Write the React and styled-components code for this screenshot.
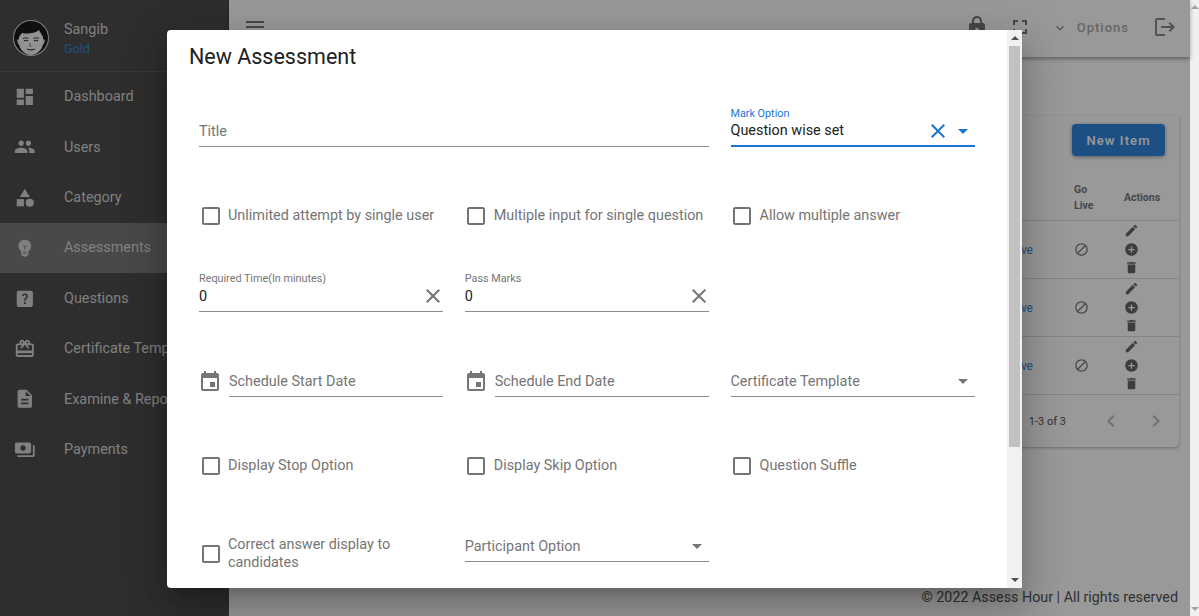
import React from 'react';
import styled, { createGlobalStyle } from 'styled-components';
import {
  MdDashboard, MdPeople, MdCategory, MdEmojiObjects, MdHelpCenter, MdOutlineRedeem, MdDescription, MdPayments,
  MdMenu, MdLock, MdFullscreen, MdExpandMore, MdLogout, MdBlock, MdEdit, MdAddCircle, MdDelete,
  MdChevronLeft, MdChevronRight, MdClose, MdArrowDropDown, MdEvent, MdCheckBoxOutlineBlank,
} from 'react-icons/md';

const GlobalStyle = createGlobalStyle`
  html, body {
    margin: 0;
    height: 100%;
    overflow: hidden;
    font-family: Roboto, 'Liberation Sans', sans-serif;
  }
`

const Screen = styled.div`
  display: flex;
  width: 1199px;
  height: 616px;
  overflow: hidden;
`

const Page = styled.div`
  position: relative;
  flex: 1;
  display: flex;
  min-width: 0;
  background: #fff;
`

const PageScroll = styled.div`
  width: 9px;
  background: #f0f0f0;
  display: flex;
  flex-direction: column;
  justify-content: space-between;
  align-items: center;
  padding: 5px 0;
  box-sizing: border-box;
`

const Arrow = styled.div`
  width: 0;
  height: 0;
  border-left: ${p => p.$size}px solid transparent;
  border-right: ${p => p.$size}px solid transparent;
  ${p => p.$down ? `border-top: ${p.$size}px solid ${p.$color};` : `border-bottom: ${p.$size}px solid ${p.$color};`}
`

const Sidebar = styled.aside`
  width: 229px;
  flex-shrink: 0;
  background: #4d4d4d;
  color: #d6d6d6;
`

const UserBox = styled.div`
  height: 65.6px;
  display: flex;
  align-items: center;
  padding: 5px 0 0 13px;
  border-bottom: 1px solid #5f5f5f;
`

const UserText = styled.div`
  margin: 2px 0 0 15px;
  font-size: 14.4px;
  line-height: 20px;
`

const Tier = styled.div`
  color: #3487d8;
  font-size: 12.5px;
  line-height: 18px;
`

const NavItem = styled.div`
  height: 50.4px;
  display: flex;
  align-items: center;
  padding-left: 14px;
  font-size: 14.4px;
  white-space: nowrap;
  background: ${p => p.$active ? '#7a7a7a' : 'transparent'};
  svg {
    width: 21.6px;
    height: 21.6px;
    margin-right: 28.4px;
    color: #d6d6d6;
  }
`

const Main = styled.main`
  flex: 1;
  min-width: 0;
  display: flex;
  flex-direction: column;
  position: relative;
`

const AppBar = styled.header`
  height: 57px;
  flex-shrink: 0;
  display: flex;
  align-items: center;
  padding: 0 13px 4px 14px;
  box-sizing: border-box;
  box-shadow: 0 2px 4px rgba(0, 0, 0, .35);
  color: #777;
  svg {
    width: 24px;
    height: 24px;
    display: block;
  }
`

const BarSpacer = styled.div`
  flex: 1;
`

const OptionsLabel = styled.span`
  font-size: 13px;
  font-weight: 500;
  letter-spacing: 1px;
  color: #aaa;
  margin: 2px 24px 0 9px;
`

const BarIcon = styled.div`
  color: ${p => p.$color || '#777'};
  margin-right: ${p => p.$gap || 0}px;
`

const OptionsChevron = styled(MdExpandMore)`
  && {
    width: 16px;
    height: 16px;
    margin-top: 2px;
    color: #999;
  }
`

const Content = styled.div`
  flex: 1;
  padding: 59px 11px 0 21px;
`

const Card = styled.section`
  height: 331px;
  border-radius: 4px;
  box-shadow: 0 1px 3px rgba(0, 0, 0, .3);
  display: flex;
  flex-direction: column;
`

const CardTop = styled.div`
  height: 66px;
  display: flex;
  justify-content: flex-end;
  align-items: flex-start;
  padding: 8px 14px 0 0;
  box-sizing: border-box;
  flex-shrink: 0;
`

const NewItem = styled.button`
  width: 93px;
  height: 32px;
  border: 0;
  border-radius: 4px;
  background: #2f86dc;
  color: #fff;
  font: 500 13px Roboto, sans-serif;
  letter-spacing: 1.1px;
  box-shadow: 0 1px 4px rgba(0, 0, 0, .4);
`

const TableRow = styled.div`
  height: ${p => p.$height}px;
  flex-shrink: 0;
  display: grid;
  grid-template-columns: 1fr 50px 55px;
  align-items: center;
  box-sizing: border-box;
  border-bottom: 1px solid #ddd;
  color: #666;
`

const HeadCell = styled.div`
  font-size: 10.5px;
  font-weight: 700;
  line-height: 16px;
  margin-bottom: 8px;
  color: #777;
`

const StatusLink = styled.div`
  text-align: right;
  padding-right: 41px;
  font-size: 12px;
  color: #3487d8;
`

const BanCell = styled.div`
  svg {
    width: 15px;
    height: 15px;
    display: block;
    color: #777;
  }
`

const ActionCell = styled.div`
  display: flex;
  flex-direction: column;
  align-items: flex-start;
  margin-top: -1px;
  svg {
    width: 15px;
    height: 15px;
    margin: 1.75px 0;
    display: block;
    color: #666;
  }
`

const Pager = styled.div`
  display: flex;
  justify-content: flex-end;
  align-items: center;
  flex: 1;
  font-size: 11px;
  color: #555;
  padding-right: 11px;
  svg {
    width: 24px;
    height: 24px;
    color: #bbb;
    margin-left: 21px;
  }
`

const PagerText = styled.span`
  margin-right: 12px;
`

const Footer = styled.footer`
  text-align: right;
  padding: 0 12px 9px 0;
  font-size: 14.3px;
  line-height: 19px;
  color: #525252;
`

const Overlay = styled.div`
  position: absolute;
  inset: 0;
  background: rgba(0, 0, 0, .4);
  display: flex;
  justify-content: center;
  align-items: flex-start;
  padding: 30px 1px 0 0;
`

const Dialog = styled.div`
  width: 855px;
  height: 558px;
  background: #fff;
  border-radius: 4px 0 0 4px;
  display: flex;
  overflow: hidden;
  box-shadow: 0 11px 15px -7px rgba(0,0,0,.2), 0 24px 38px 3px rgba(0,0,0,.14), 0 9px 46px 8px rgba(0,0,0,.12);
`

const DialogBody = styled.div`
  flex: 1;
  min-width: 0;
  overflow: hidden;
`

const DialogTitle = styled.h2`
  margin: 0;
  padding: 13px 22px 0;
  height: 69px;
  box-sizing: border-box;
  font-size: 21.5px;
  line-height: 28px;
  font-weight: 400;
  color: #212121;
`

const FormRow = styled.div`
  display: grid;
  grid-template-columns: repeat(3, 244px);
  column-gap: 21.75px;
  padding-left: 32px;
  margin-top: ${p => p.$top || 0}px;
  align-items: start;
`

const FieldWrap = styled.div`
  grid-column: span ${p => p.$span || 1};
  height: 48px;
  position: relative;
  box-sizing: border-box;
  border-bottom: ${p => p.$focused ? '2px solid #1976d2' : '1px solid #8c8c8c'};
  display: flex;
  align-items: flex-end;
  justify-content: space-between;
  padding-bottom: 4px;
  font-size: 14.4px;
  line-height: 20px;
`

const FieldLabel = styled.div`
  position: absolute;
  left: 0;
  top: 8px;
  font-size: 10.8px;
  line-height: 14px;
  color: ${p => p.$focused ? '#1976d2' : '#757575'};
`

const Placeholder = styled.span`
  color: #757575;
`

const Value = styled.span`
  color: #212121;
`

const FieldIcons = styled.div`
  display: flex;
  align-items: center;
  height: 20px;
  margin-bottom: ${p => p.$lift || 0}px;
  color: ${p => p.$color};
`

const ClearIcon = styled(MdClose)`
  width: 24px;
  height: 24px;
  margin-right: ${p => p.$gap}px;
`

const CaretIcon = styled(MdArrowDropDown)`
  width: 24px;
  height: 24px;
`

const DateField = styled.div`
  display: flex;
  align-items: flex-end;
  > div {
    flex: 1;
  }
`

const DateIcon = styled(MdEvent)`
  width: 24px;
  height: 24px;
  color: #757575;
  margin: 0 7px 3px -1px;
  flex-shrink: 0;
`

const CheckRow = styled.label`
  display: flex;
  align-items: center;
  min-height: 40px;
  font-size: 14.4px;
  line-height: 18px;
  color: #757575;
  margin-left: -0.5px;
  ${p => p.$wrapped && 'margin: 20px 10px 0 -0.5px;'}
`

const BoxIcon = styled(MdCheckBoxOutlineBlank)`
  width: 24px;
  height: 24px;
  margin-right: 5.5px;
  flex-shrink: 0;
`

const DialogScroll = styled.div`
  width: 15px;
  flex-shrink: 0;
  background: #f1f1f1;
  display: flex;
  flex-direction: column;
  align-items: center;
`

const ScrollButton = styled.div`
  height: 16px;
  flex-shrink: 0;
  width: 100%;
  display: flex;
  align-items: center;
  justify-content: center;
`

const ScrollThumb = styled.div`
  width: 11px;
  height: 401px;
  background: #c1c1c1;
  flex-shrink: 0;
`

const ScrollRest = styled.div`
  flex: 1;
`

const AvatarImg = () => (
  <svg width="36" height="36" viewBox="0 0 36 36">
    <circle cx="18" cy="18" r="18" fill="#d8d8d8" />
    <circle cx="18" cy="18" r="17" fill="#1a1a1a" />
    <path d="M6 17c1-2 2-3 3-4 5 1 12 1 17-3 1 2 3 5 4 7v6c0 6-6 12-12 12S6 29 6 23z" fill="#f4f4f4" />
    <path d="M4 20l2-1 1 6-2-1zM32 20l-2-1-1 6 2-1z" fill="#e0e0e0" />
    <path d="M10 18.500c2-1 4-1 5.500 0M20.500 18.500c2-1 4-1 5.500 0" fill="none" stroke="#222" strokeWidth=".9" />
    <path d="M11 21c1-.7 3-.7 4 0M21 21c1-.7 3-.7 4 0" fill="none" stroke="#333" strokeWidth="1.100" />
    <path d="M17 23l-.6 3h3" fill="none" stroke="#666" strokeWidth=".7" />
    <path d="M14 29c2 1.200 6 1.200 8 0" fill="none" stroke="#222" strokeWidth="1" />
  </svg>
)

const navItems = [
  { label: 'Dashboard', icon: MdDashboard },
  { label: 'Users', icon: MdPeople },
  { label: 'Category', icon: MdCategory },
  { label: 'Assessments', icon: MdEmojiObjects, active: true },
  { label: 'Questions', icon: MdHelpCenter },
  { label: 'Certificate Template', icon: MdOutlineRedeem },
  { label: 'Examine & Report', icon: MdDescription },
  { label: 'Payments', icon: MdPayments },
]

const Check = ({ children, wrapped }) => (
  <CheckRow $wrapped={wrapped}>
    <BoxIcon />
    <span>{children}</span>
  </CheckRow>
)

const NumberField = ({ label }) => (
  <FieldWrap>
    <FieldLabel>{label}</FieldLabel>
    <Value>0</Value>
    <FieldIcons $color="#757575" $lift={1}><ClearIcon $gap={-2} /></FieldIcons>
  </FieldWrap>
)

const SelectField = ({ label }) => (
  <FieldWrap>
    <Placeholder>{label}</Placeholder>
    <FieldIcons $color="#757575" $lift={1}><CaretIcon /></FieldIcons>
  </FieldWrap>
)

const DatePicker = ({ label }) => (
  <DateField>
    <DateIcon />
    <FieldWrap>
      <Placeholder>{label}</Placeholder>
    </FieldWrap>
  </DateField>
)

const App = () => {
  return (
    <Screen>
      <GlobalStyle />
      <Page>
        <Sidebar>
          <UserBox>
            <AvatarImg />
            <UserText>
              Sangib
              <Tier>Gold</Tier>
            </UserText>
          </UserBox>
          {navItems.map(item => (
            <NavItem key={item.label} $active={item.active}>
              <item.icon />
              {item.label}
            </NavItem>
          ))}
        </Sidebar>
        <Main>
          <AppBar>
            <BarIcon><MdMenu /></BarIcon>
            <BarSpacer />
            <BarIcon $color="#777" $gap={19}><MdLock /></BarIcon>
            <BarIcon $color="#777" $gap={20}><MdFullscreen /></BarIcon>
            <BarIcon><OptionsChevron /></BarIcon>
            <OptionsLabel>Options</OptionsLabel>
            <BarIcon $color="#8a8a8a"><MdLogout /></BarIcon>
          </AppBar>
          <Content>
            <Card>
              <CardTop><NewItem>New Item</NewItem></CardTop>
              <TableRow $height={39}>
                <div />
                <HeadCell>Go<br />Live</HeadCell>
                <HeadCell>Actions</HeadCell>
              </TableRow>
              {[1, 2, 3].map(row => (
                <TableRow key={row} $height={58}>
                  <StatusLink>Inactive</StatusLink>
                  <BanCell><MdBlock /></BanCell>
                  <ActionCell><MdEdit /><MdAddCircle /><MdDelete /></ActionCell>
                </TableRow>
              ))}
              <Pager>
                <PagerText>1-3 of 3</PagerText>
                <MdChevronLeft />
                <MdChevronRight />
              </Pager>
            </Card>
          </Content>
          <Footer>© 2022 Assess Hour | All rights reserved</Footer>
        </Main>
        <Overlay>
          <Dialog>
            <DialogBody>
              <DialogTitle>New Assessment</DialogTitle>
              <FormRow>
                <FieldWrap $span={2}><Placeholder>Title</Placeholder></FieldWrap>
                <FieldWrap $focused>
                  <FieldLabel $focused>Mark Option</FieldLabel>
                  <Value>Question wise set</Value>
                  <FieldIcons $color="#1976d2"><ClearIcon $gap={1} /><CaretIcon /></FieldIcons>
                </FieldWrap>
              </FormRow>
              <FormRow $top={49}>
                <Check>Unlimited attempt by single user</Check>
                <Check>Multiple input for single question</Check>
                <Check>Allow multiple answer</Check>
              </FormRow>
              <FormRow $top={28}>
                <NumberField label="Required Time(In minutes)" />
                <NumberField label="Pass Marks" />
              </FormRow>
              <FormRow $top={37}>
                <DatePicker label="Schedule Start Date" />
                <DatePicker label="Schedule End Date" />
                <SelectField label="Certificate Template" />
              </FormRow>
              <FormRow $top={49}>
                <Check>Display Stop Option</Check>
                <Check>Display Skip Option</Check>
                <Check>Question Suffle</Check>
              </FormRow>
              <FormRow $top={28}>
                <Check wrapped>Correct answer display to candidates</Check>
                <SelectField label="Participant Option" />
              </FormRow>
            </DialogBody>
            <DialogScroll>
              <ScrollButton><Arrow $size={4} $color="#505050" /></ScrollButton>
              <ScrollThumb />
              <ScrollRest />
              <ScrollButton><Arrow $size={4} $color="#505050" $down /></ScrollButton>
            </DialogScroll>
          </Dialog>
        </Overlay>
      </Page>
      <PageScroll>
        <Arrow $size={4} $color="#a3a3a3" />
        <Arrow $size={4} $color="#a3a3a3" $down />
      </PageScroll>
    </Screen>
  )
}

export default App;
